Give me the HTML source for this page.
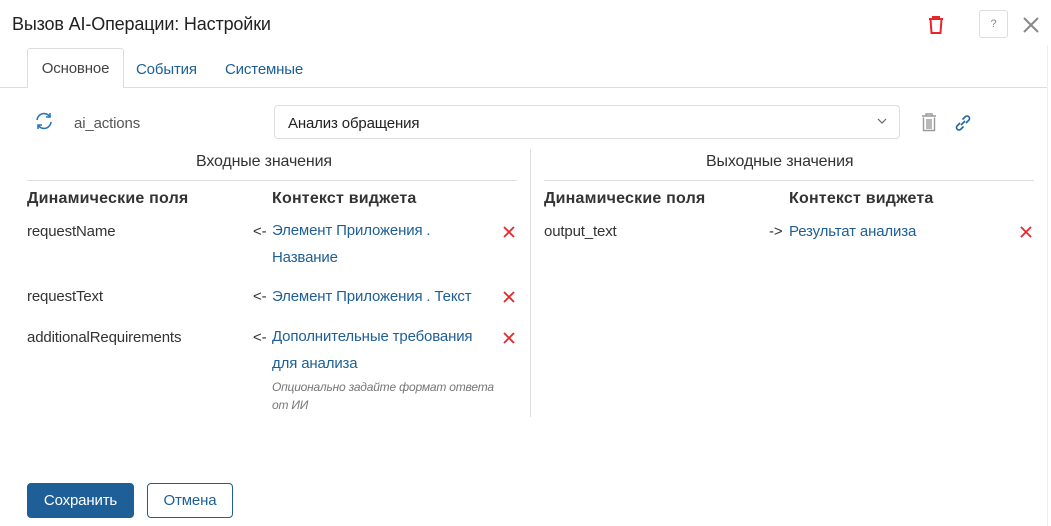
<!DOCTYPE html>
<html><head><meta charset="utf-8"><style>
*{box-sizing:border-box;margin:0;padding:0}
body{width:1051px;height:526px;background:#fff;font-family:"Liberation Sans",sans-serif;color:#333;position:relative;overflow:hidden;font-size:15px;letter-spacing:-0.15px}
.a{position:absolute;white-space:nowrap}
.l{color:#1d5f96}
.h{font-weight:bold;font-size:16px;color:#333;letter-spacing:0.2px}
.x{position:absolute;width:14px;height:14px}
</style></head><body>
<div class="a" style="left:12px;top:14px;font-size:18px;color:#222">Вызов AI-Операции: Настройки</div>
<svg class="a" style="left:927px;top:15px" width="18" height="20" viewBox="0 0 18 20"><path d="M2 4h14M6 4V2h6v2M3.5 4l1 14h9l1-14" fill="none" stroke="#e5262b" stroke-width="2"/></svg>
<div class="a" style="left:979px;top:10px;width:29px;height:28px;border:1px solid #ddd;border-radius:3px;font-size:11px;color:#888;text-align:center;line-height:26px">?</div>
<svg class="a" style="left:1022px;top:16px" width="18" height="18"><path d="M2 2L16 16M16 2L2 16" stroke="#888" stroke-width="2"/></svg>
<div class="a" style="left:0;top:87px;width:1047px;height:1px;background:#ddd"></div>
<div class="a" style="left:1047px;top:45px;width:1px;height:481px;background:#eee"></div>
<div class="a" style="left:27px;top:48px;width:97px;height:40px;border:1px solid #ddd;border-bottom:none;background:#fff;border-radius:3px 3px 0 0;text-align:center;line-height:40px;color:#444">Основное</div>
<div class="a l" style="left:136px;top:61px">События</div>
<div class="a l" style="left:225px;top:61px">Системные</div>
<svg class="a" style="left:34px;top:111px" width="20" height="20" viewBox="0 0 20 20"><path d="M3 9a7 7 0 0 1 13-3M17 11a7 7 0 0 1-13 3" fill="none" stroke="#2a74b5" stroke-width="1.6"/><path d="M16 2v4h-4M4 18v-4h4" fill="none" stroke="#2a74b5" stroke-width="1.6"/></svg>
<div class="a" style="left:74px;top:115px;color:#555">ai_actions</div>
<div class="a" style="left:274px;top:105px;width:626px;height:34px;border:1px solid #ddd;border-radius:4px;padding:9px 13px;color:#222">Анализ обращения</div>
<svg class="a" style="left:877px;top:117px" width="10" height="8"><path d="M1 2l4 4 4-4" fill="none" stroke="#666" stroke-width="1.2"/></svg>
<svg class="a" style="left:921px;top:113px" width="16" height="19" viewBox="0 0 16 19"><path d="M1 3h14M5 3V1h6v2M2.5 4.5v13h11v-13M6 6v10M8 6v10M10 6v10" fill="none" stroke="#999" stroke-width="1.4"/></svg>
<svg class="a" style="left:953px;top:113px" width="20" height="20" viewBox="0 0 20 20"><path d="M8 12l4-4M7 10l-3 3a2.5 2.5 0 0 0 3.5 3.5l3-3M13 10l3-3a2.5 2.5 0 0 0-3.5-3.5l-3 3" fill="none" stroke="#1d64a8" stroke-width="1.6"/></svg>
<div class="a" style="left:196px;top:153px;font-size:16px">Входные значения</div>
<div class="a" style="left:706px;top:153px;font-size:16px">Выходные значения</div>
<div class="a" style="left:27px;top:180px;width:490px;height:1px;background:#ddd"></div>
<div class="a" style="left:544px;top:180px;width:490px;height:1px;background:#ddd"></div>
<div class="a" style="left:530px;top:149px;width:1px;height:268px;background:#ddd"></div>
<div class="a h" style="left:27px;top:190px">Динамические поля</div>
<div class="a h" style="left:272px;top:190px">Контекст виджета</div>
<div class="a h" style="left:544px;top:190px">Динамические поля</div>
<div class="a h" style="left:789px;top:190px">Контекст виджета</div>
<svg width="0" height="0" style="position:absolute"><defs><path id="xx" d="M2 2L12 12M12 2L2 12" stroke="#e5262b" stroke-width="1.8"/></defs></svg>
<div class="a" style="left:27px;top:223px">requestName</div>
<div class="a" style="left:253px;top:223px">&lt;-</div>
<div class="a l" style="left:272px;top:217px;line-height:27px">Элемент Приложения .<br>Название</div>
<svg class="x" style="left:502px;top:225px"><use href="#xx"/></svg>
<div class="a" style="left:27px;top:288px">requestText</div>
<div class="a" style="left:253px;top:288px">&lt;-</div>
<div class="a l" style="left:272px;top:288px">Элемент Приложения . Текст</div>
<svg class="x" style="left:502px;top:290px"><use href="#xx"/></svg>
<div class="a" style="left:27px;top:329px">additionalRequirements</div>
<div class="a" style="left:253px;top:329px">&lt;-</div>
<div class="a l" style="left:272px;top:323px;line-height:27px">Дополнительные требования<br>для анализа</div>
<div class="a" style="left:272px;top:378px;font-size:12px;font-style:italic;color:#777;line-height:18px;letter-spacing:-0.2px">Опционально задайте формат ответа<br>от ИИ</div>
<svg class="x" style="left:502px;top:331px"><use href="#xx"/></svg>
<div class="a" style="left:544px;top:223px">output_text</div>
<div class="a" style="left:769px;top:223px">-&gt;</div>
<div class="a l" style="left:789px;top:223px">Результат анализа</div>
<svg class="x" style="left:1019px;top:225px"><use href="#xx"/></svg>
<div class="a" style="left:27px;top:483px;width:107px;height:35px;background:#1d5f96;border-radius:4px;color:#fff;text-align:center;line-height:35px">Сохранить</div>
<div class="a" style="left:147px;top:483px;width:86px;height:35px;border:1px solid #1d5f96;border-radius:4px;color:#1d5f96;text-align:center;line-height:33px">Отмена</div>
</body></html>
